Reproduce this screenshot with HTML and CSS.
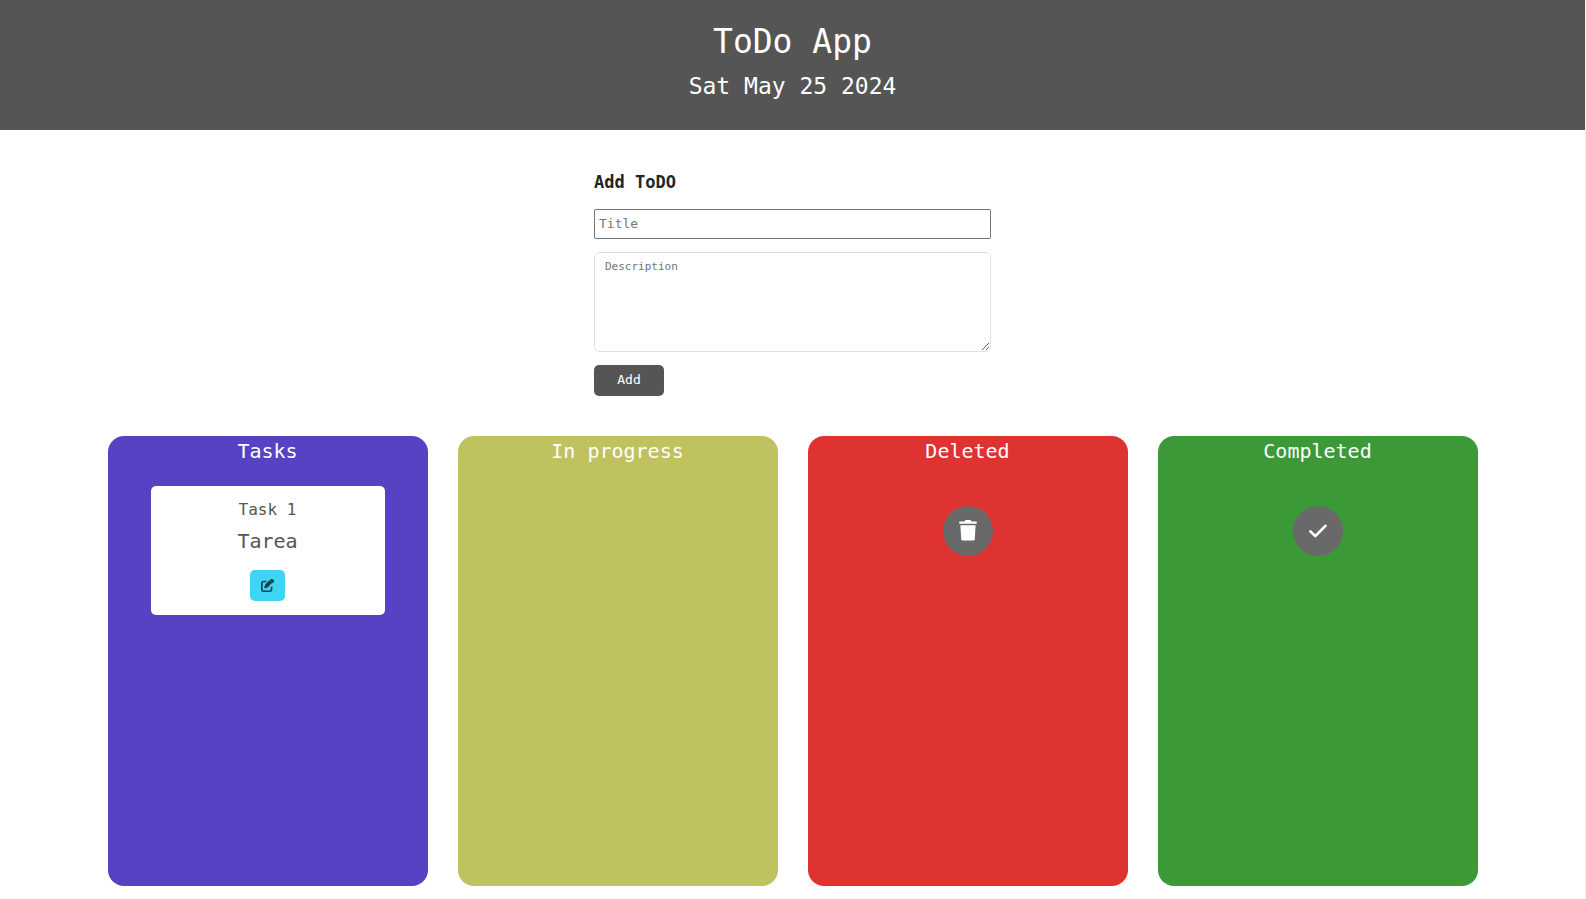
FILE: index.html
```html
<!DOCTYPE html>
<html lang="en">
<head>
<meta charset="utf-8">
<meta name="viewport" content="width=device-width, initial-scale=1">
<title>ToDo App</title>
<link rel="stylesheet" href="styles.css">
</head>
<body>
<header class="header">
  <h1 class="header-title">ToDo App</h1>
  <p class="header-date">Sat May 25 2024</p>
</header>
<main class="main">
  <form class="form">
    <h2 class="form-title">Add ToDO</h2>
    <input class="form-input" type="text" placeholder="Title" aria-label="Title">
    <textarea class="form-text" placeholder="Description" aria-label="Description"></textarea>
    <button class="form-add" type="button">Add</button>
  </form>
  <div class="board">
    <section class="column column-tasks">
      <h2 class="column-title">Tasks</h2>
      <article class="card">
        <h3 class="card-title">Task 1</h3>
        <p class="card-text">Tarea</p>
        <button class="card-edit" type="button" aria-label="Edit task">
          <svg width="13" height="13" viewBox="0 0 512 512" fill="currentColor" aria-hidden="true"><path d="M472 20a68 68 0 0 0-96 0l-30 30 118 118 30-30a68 68 0 0 0 0-96zM172 221c-6 6-11 14-14 23l-30 89c-3 9-1 19 6 25 6 7 16 9 25 6l89-30c8-3 16-8 23-14l171-174L324 48zM96 64C43 64 0 107 0 160v256c0 53 43 96 96 96h256c53 0 96-43 96-96v-110h-64v110c0 18-14 32-32 32H96c-18 0-32-14-32-32V160c0-18 14-32 32-32h110V64z"/></svg>
        </button>
      </article>
    </section>
    <section class="column column-progress">
      <h2 class="column-title">In progress</h2>
    </section>
    <section class="column column-deleted">
      <h2 class="column-title">Deleted</h2>
      <div class="badge">
        <svg width="18" height="22" viewBox="0 0 18 22" fill="currentColor" aria-hidden="true"><path d="M.8 1.400h4.600L6 .5Q6.300 0 7 0h4q.7 0 1 .5l.6.9h4.600q.6 0 .6.6v1.200q0 .6-.6.6H.8q-.6 0-.6-.6V2q0-.6.6-.6zM1.400 5.200h15.200l-.8 13.800q-.1 1.600-1.700 1.600H3.900q-1.600 0-1.700-1.600z"/></svg>
      </div>
    </section>
    <section class="column column-completed">
      <h2 class="column-title">Completed</h2>
      <div class="badge">
        <svg width="18" height="15" viewBox="0 0 18 15" fill="none" stroke="currentColor" stroke-width="2.600" stroke-linecap="round" stroke-linejoin="round" aria-hidden="true"><path d="M1.400 7.300 6.300 12.200 16.400 1.800"/></svg>
      </div>
    </section>
  </div>
</main>
</body>
</html>
```
FILE: styles.css
```css
* {
  box-sizing: border-box;
}

body,
h1,
h2,
h3,
p {
  margin: 0;
  font-weight: 400;
}

body,
input,
textarea,
button {
  font-family: "DejaVu Sans Mono", monospace;
}

body {
  border-right: 1px solid #f0f0f0;
  background: #fff;
  color: #212529;
}

.header {
  padding: 22px 16px 28px;
  background: #555;
  color: #fff;
  text-align: center;
}

.header-title {
  margin-bottom: 8px;
  font-size: 33px;
  line-height: 40px;
}

.header-date {
  font-size: 23px;
  line-height: 32px;
}

.main {
  padding: 40px 16px 13px;
}

.form {
  display: flex;
  flex-direction: column;
  align-items: flex-start;
  width: 100%;
  max-width: 397px;
  margin: 0 auto 40px;
}

.form-title {
  margin-bottom: 15px;
  font-size: 17px;
  font-weight: 700;
  line-height: 24px;
}

.form-input {
  width: 100%;
  height: 30px;
  margin-bottom: 13px;
  padding: 0 4px 2px;
  border: 1px solid #767676;
  border-radius: 2px;
  font-size: 13px;
}

.form-text {
  width: 100%;
  height: 100px;
  margin-bottom: 13px;
  padding: 7px 10px;
  border: 1px solid #dee2e6;
  border-radius: 5px;
  font-size: 11px;
}

.form-input::placeholder,
.form-text::placeholder {
  color: #757575;
}

.form-add {
  width: 70px;
  height: 31px;
  padding: 0 0 2px;
  border: 0;
  border-radius: 5px;
  background: #555;
  color: #fff;
  font-size: 13px;
}

.board {
  display: flex;
  flex-wrap: wrap;
  justify-content: center;
  gap: 30px;
}

.column {
  display: flex;
  flex-direction: column;
  align-items: center;
  width: 320px;
  min-height: 450px;
  border-radius: 16px;
}

.column-tasks {
  background: #5543c3;
}

.column-progress {
  background: #bfc25e;
}

.column-deleted {
  background: #df3332;
}

.column-completed {
  background: #3c9937;
}

.column-title {
  margin-bottom: 20px;
  color: #fff;
  font-size: 20px;
  line-height: 30px;
}

.card {
  display: flex;
  flex-direction: column;
  align-items: center;
  width: 234px;
  padding: 14px;
  border-radius: 5px;
  background: #fff;
  color: #555;
}

.card-title {
  margin-bottom: 6px;
  font-size: 16px;
  line-height: 20px;
}

.card-text {
  margin-bottom: 14px;
  font-size: 20px;
  line-height: 30px;
}

.card-edit {
  display: flex;
  align-items: center;
  justify-content: center;
  width: 35px;
  height: 31px;
  padding: 0;
  border: 0;
  border-radius: 5px;
  background: #3dd5f3;
  color: #16404a;
}

.badge {
  display: flex;
  align-items: center;
  justify-content: center;
  width: 50px;
  height: 50px;
  margin-top: 20px;
  border-radius: 50%;
  background: #696969;
  color: #fff;
}
```
